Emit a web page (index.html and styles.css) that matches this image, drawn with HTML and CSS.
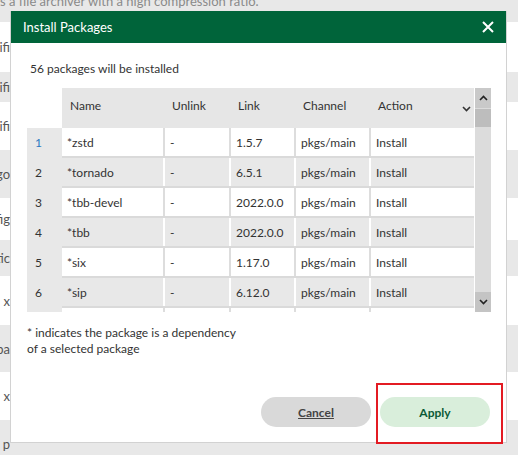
FILE: index.html
```html
<!DOCTYPE html>
<html lang="en">
<head>
    <meta charset="UTF-8">
    <title>Install Packages</title>
    <link rel="stylesheet" href="styles.css">
</head>
<body>
    <div class="bg-list">
        <div class="bg-row gray first"><span class="bg-desc">is a file archiver with a high compression ratio.</span></div>
        <div class="bg-row r50"><span class="tail">Unifi</span></div>
        <div class="bg-row gray r30"><span class="tail">Unifi</span></div>
        <div class="bg-row r48"><span class="tail">Unifi</span></div>
        <div class="bg-row gray r48"><span class="tail">cargo</span></div>
        <div class="bg-row r42"><span class="tail">config</span></div>
        <div class="bg-row gray r36"><span class="tail">static</span></div>
        <div class="bg-row r49"><span class="tail">x</span></div>
        <div class="bg-row gray r47"><span class="tail">pa</span></div>
        <div class="bg-row r48"><span class="tail">x</span></div>
        <div class="bg-row gray r48"><span class="tail">p</span></div>
    </div>

    <div class="modal">
        <div class="modal-header">
            <span class="modal-title">Install Packages</span>
            <button class="close-btn" aria-label="Close">
                <svg width="12" height="12" viewBox="0 0 12 12"><path d="M1 1L11 11M11 1L1 11" stroke="#fff" stroke-width="2"/></svg>
            </button>
        </div>
        <div class="modal-body">
            <p class="summary">56 packages will be installed</p>
            <div class="pkg-wrap">
                <div class="pkg-scroll">
                    <table class="pkg-table">
                        <colgroup>
                            <col class="c-num"><col class="c-name"><col class="c-unlink"><col class="c-link"><col class="c-channel"><col class="c-action">
                        </colgroup>
                        <thead>
                            <tr>
                                <th class="num"></th>
                                <th>Name</th>
                                <th>Unlink</th>
                                <th>Link</th>
                                <th>Channel</th>
                                <th class="action-head">Action
                                    <svg class="sort" width="9" height="6" viewBox="0 0 9 6"><path d="M1 1L4.5 4.5L8 1" fill="none" stroke="#333" stroke-width="1.6"/></svg>
                                </th>
                            </tr>
                        </thead>
                        <tbody>
                            <tr><td class="num active">1</td><td>*zstd</td><td>-</td><td>1.5.7</td><td>pkgs/main</td><td>Install</td></tr>
                            <tr><td class="num">2</td><td>*tornado</td><td>-</td><td>6.5.1</td><td>pkgs/main</td><td>Install</td></tr>
                            <tr><td class="num">3</td><td>*tbb-devel</td><td>-</td><td>2022.0.0</td><td>pkgs/main</td><td>Install</td></tr>
                            <tr><td class="num">4</td><td>*tbb</td><td>-</td><td>2022.0.0</td><td>pkgs/main</td><td>Install</td></tr>
                            <tr><td class="num">5</td><td>*six</td><td>-</td><td>1.17.0</td><td>pkgs/main</td><td>Install</td></tr>
                            <tr><td class="num">6</td><td>*sip</td><td>-</td><td>6.12.0</td><td>pkgs/main</td><td>Install</td></tr>
                            <tr><td class="num">7</td><td>*sqlite</td><td>-</td><td>3.50.2</td><td>pkgs/main</td><td>Install</td></tr>
                            <tr><td class="num">8</td><td>*setuptools</td><td>-</td><td>78.1.1</td><td>pkgs/main</td><td>Install</td></tr>
                        </tbody>
                    </table>
                </div>
                <div class="scrollbar">
                    <div class="sb-btn">
                        <svg width="9" height="6" viewBox="0 0 9 6"><path d="M1 5L4.5 1.5L8 5" fill="none" stroke="#222" stroke-width="1.6"/></svg>
                    </div>
                    <div class="sb-thumb"></div>
                    <div class="sb-track"></div>
                    <div class="sb-btn down">
                        <svg width="9" height="6" viewBox="0 0 9 6"><path d="M1 1L4.5 4.5L8 1" fill="none" stroke="#222" stroke-width="1.6"/></svg>
                    </div>
                </div>
            </div>
            <p class="note">* indicates the package is a dependency<br>of a selected package</p>
        </div>
        <div class="modal-footer">
            <button class="btn btn-cancel">Cancel</button>
            <div class="highlight">
                <button class="btn btn-apply">Apply</button>
            </div>
        </div>
    </div>
</body>
</html>
```

FILE: styles.css
```css
body {
    margin: 0;
    padding: 0;
    background-color: #e8e8e8;
    font-family: Lato, "Open Sans", sans-serif;
    font-size: 12px;
    color: #333333;
    overflow: hidden;
}
.bg-list {
    display: flex;
    flex-direction: column;
}
.bg-row {
    display: flex;
    align-items: center;
    background-color: #ffffff;
    color: #555555;
    font-size: 13px;
}
.bg-row.gray {
    background-color: #e8e8e8;
}
.bg-row.first {
    height: 22px;
    align-items: flex-start;
}
.r30 { height: 30px; }
.r36 { height: 36px; }
.r42 { height: 42px; }
.r47 { height: 47px; }
.r48 { height: 48px; }
.r49 { height: 49px; }
.r50 { height: 50px; }
.bg-desc {
    margin: -7px 0 0 -3px;
    color: #8a8a8a;
    white-space: nowrap;
}
.tail {
    display: block;
    width: 10px;
    overflow: hidden;
    white-space: nowrap;
    direction: rtl;
}

.modal {
    position: absolute;
    top: 11px;
    left: 10px;
    width: 497px;
    height: 432px;
    box-sizing: border-box;
    display: flex;
    flex-direction: column;
    background-color: #ffffff;
    border: 1px solid #d2d2d2;
    border-top: none;
}
.modal-header {
    display: flex;
    align-items: center;
    justify-content: space-between;
    height: 32px;
    padding: 0 12px 0 12px;
    background-color: #00643a;
    color: #ffffff;
}
.modal-title {
    font-size: 13px;
}
.close-btn {
    display: flex;
    align-items: center;
    background: none;
    border: none;
    padding: 0;
    cursor: pointer;
}
.modal-body {
    padding: 0 15px 0 16px;
}
.summary {
    margin: 18px 0 11px 3px;
    line-height: 16px;
}
.pkg-wrap {
    display: flex;
    height: 224px;
}
.pkg-scroll {
    width: 447px;
    overflow: hidden;
}
.pkg-table {
    width: 447px;
    table-layout: fixed;
    border-collapse: collapse;
}
.c-num { width: 35px; }
.c-name { width: 102px; }
.c-unlink { width: 66px; }
.c-link { width: 65px; }
.c-channel { width: 75px; }
.c-action { width: 104px; }
.pkg-table th {
    height: 35px;
    padding: 0 8px 5px 8px;
    text-align: left;
    font-weight: normal;
    background-color: #e6e6e6;
}
.pkg-table th.num {
    background-color: #ffffff;
}
.action-head {
    position: relative;
}
.sort {
    position: absolute;
    right: 3px;
    top: 18px;
}
.pkg-table td {
    height: 28px;
    padding: 0 4px 0 5px;
    white-space: nowrap;
    overflow: hidden;
    border-right: 2px solid #dddddd;
    border-bottom: 2px solid #dadada;
}
.pkg-table tbody tr:nth-child(even) td {
    background-color: #e8e8e8;
    border-right-color: #ffffff;
}
.pkg-table td:last-child {
    border-right: none;
}
.pkg-table td.num {
    padding-left: 8px;
    background-color: #e8e8e8;
    border-right: none;
    border-bottom-color: #e8e8e8;
}
.pkg-table td.active {
    color: #2b78c2;
}
.scrollbar {
    display: flex;
    flex-direction: column;
    width: 16px;
    margin-left: 1px;
    background-color: #dcdcdc;
}
.sb-btn {
    display: flex;
    align-items: center;
    justify-content: center;
    height: 20px;
    background-color: #c9c9c9;
}
.sb-btn.down {
    background-color: #c4c4c4;
}
.sb-thumb {
    height: 18px;
    background-color: #bdbdbd;
    border-top: 1px solid #dcdcdc;
}
.sb-track {
    flex: 1;
}
.note {
    margin: 13px 0 0 0;
    line-height: 16px;
}

.modal-footer {
    display: flex;
    align-items: flex-start;
    justify-content: flex-end;
    gap: 5px;
    margin-top: auto;
    margin-bottom: -2px;
    padding-right: 3px;
}
.btn {
    width: 110px;
    height: 30px;
    border: none;
    border-radius: 15px;
    font-family: Lato, "Open Sans", sans-serif;
    font-size: 12px;
    font-weight: bold;
    cursor: pointer;
}
.btn-cancel {
    margin-top: 14px;
    background-color: #d9d9d9;
    color: #444444;
    text-decoration: underline;
}
.highlight {
    padding: 12px 11px 15px 2px;
    border: 2px solid #e31b23;
}
.btn-apply {
    background-color: #d9eedb;
    color: #0b5a36;
}
```
